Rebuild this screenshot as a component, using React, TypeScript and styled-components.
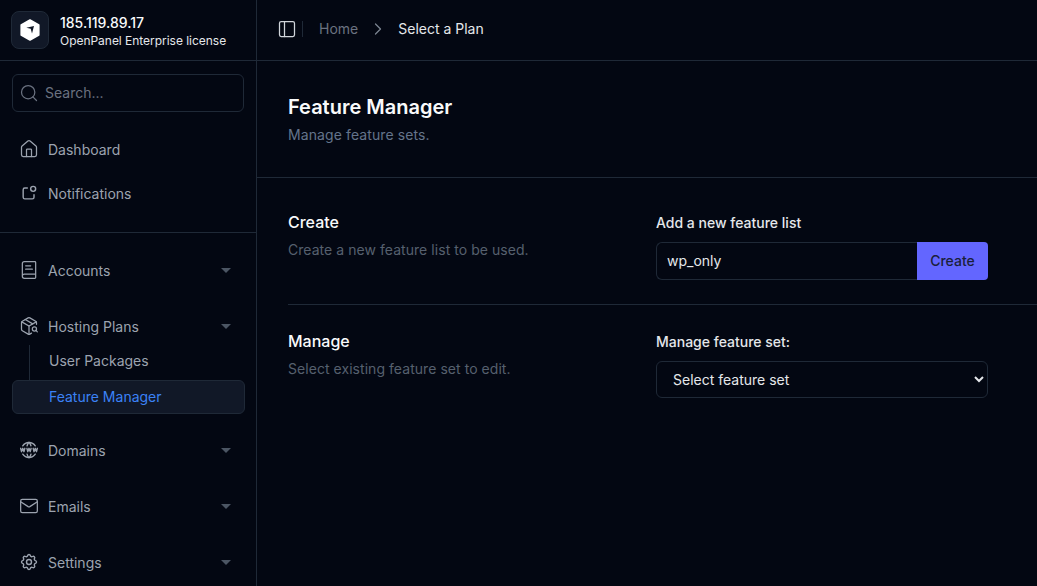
import React from 'react';
import styled, { createGlobalStyle } from 'styled-components';
import { Search, House, BookText, Mail, PanelLeft, ChevronRight, PackageSearch } from 'lucide-react';
import { TbNotification, TbWorldWww, TbSettings } from 'react-icons/tb';

const Global = createGlobalStyle`
  html, body { margin: 0; padding: 0; background: #030712; }
  body { font-family: Inter, "Liberation Sans", sans-serif; overflow: hidden; }
  * { box-sizing: border-box; }
`;

const Shell = styled.div`
  display: flex;
  width: 1037px;
  height: 586px;
  overflow: hidden;
  background: #030712;
`;

const Sidebar = styled.aside`
  width: 257px;
  flex: none;
  height: 586px;
  overflow: hidden;
  border-right: 1px solid #1f2937;
`;

const Brand = styled.div`
  height: 61px;
  display: flex;
  align-items: center;
  gap: 11px;
  padding: 0 11px;
  border-bottom: 1px solid #1f2937;
`;

const LogoBox = styled.div`
  width: 38px;
  height: 38px;
  display: flex;
  align-items: center;
  justify-content: center;
  background: #111827;
  border: 1px solid #1f2937;
  border-radius: 8px;
  color: #fff;
`;

const BrandText = styled.div`
  display: flex;
  flex-direction: column;
  padding-top: 2px;
`;

const BrandTitle = styled.div`
  font-size: 14px;
  line-height: 20px;
  font-weight: 500;
  color: #f9fafb;
`;

const BrandSub = styled.div`
  font-size: 12px;
  line-height: 16px;
  color: #e5e7eb;
  letter-spacing: -0.03px;
`;

const SearchBox = styled.div`
  margin: 13px 12px 0;
  height: 38px;
  display: flex;
  align-items: center;
  gap: 6px;
  padding: 0 6px 2px;
  border: 1px solid #1f2937;
  border-radius: 6px;
  color: #6b7280;
  font-size: 14px;
  svg { margin-top: 2px; }
`;

const TopNav = styled.nav`
  padding: 21px 12px 0;
  border-bottom: 1px solid #1f2937;
  display: flex;
  flex-direction: column;
  gap: 12px;
  height: 121px;
`;

const MainNav = styled.nav`
  padding: 21px 12px 0;
  display: flex;
  flex-direction: column;
`;

const NavRow = styled.div<{ $mb?: number }>`
  height: 32px;
  display: flex;
  align-items: center;
  gap: 9px;
  padding: 0 8px 0 7px;
  margin-bottom: ${p => p.$mb ?? 0}px;
  color: #9ca3af;
  font-size: 14px;
  flex: none;
`;

const NavLabel = styled.span`
  flex: 1;
`;

const Caret = styled.span`
  width: 0;
  height: 0;
  border-left: 5px solid transparent;
  border-right: 5px solid transparent;
  border-top: 5px solid #4b5563;
  margin-right: 5px;
`;

const SubList = styled.div`
  position: relative;
  margin-top: 1px;
  margin-bottom: 20px;
  &::before {
    content: '';
    position: absolute;
    left: 17px;
    top: 2px;
    height: 35px;
    width: 1px;
    background: #1f2937;
  }
`;

const SubItem = styled.div<{ $active?: boolean }>`
  height: 34px;
  margin-top: ${p => (p.$active ? 3 : 0)}px;
  display: flex;
  align-items: center;
  padding-left: 36px;
  padding-bottom: ${p => (p.$active ? 2 : 0)}px;
  width: 233px;
  font-size: 14px;
  color: ${p => (p.$active ? '#3b82f6' : '#9ca3af')};
  background: ${p => (p.$active ? '#111827' : 'transparent')};
  border: 1px solid ${p => (p.$active ? '#1f2937' : 'transparent')};
  border-radius: 6px;
`;

const Main = styled.main`
  flex: 1;
  min-width: 0;
`;

const TopBar = styled.header`
  height: 61px;
  display: flex;
  align-items: center;
  padding: 0 0 3px 20px;
  border-bottom: 1px solid #1f2937;
  font-size: 14px;
`;

const TopDivider = styled.span`
  width: 1px;
  height: 16px;
  background: #1f2937;
  margin: 0 16px 0 5px;
`;

const Crumb = styled.span<{ $current?: boolean }>`
  color: ${p => (p.$current ? '#e5e7eb' : '#6b7280')};
`;

const CrumbSep = styled.span`
  display: flex;
  color: #7b8491;
  margin: 0 10px;
`;

const PageHead = styled.section`
  height: 117px;
  padding: 32px 31px 0;
  border-bottom: 1px solid #1f2937;
`;

const PageTitle = styled.h1`
  margin: 0;
  font-size: 20px;
  line-height: 28px;
  font-weight: 600;
  color: #f9fafb;
`;

const PageSub = styled.p`
  margin: 4px 0 0;
  font-size: 14px;
  line-height: 20px;
  letter-spacing: 0.1px;
  color: #64748b;
`;

const Row = styled.section<{ $h: number; $line?: boolean; $pt: number }>`
  margin-left: 31px;
  height: ${p => p.$h}px;
  padding-top: ${p => p.$pt}px;
  display: grid;
  grid-template-columns: 368px 332px;
  border-bottom: ${p => (p.$line ? '1px solid #1f2937' : 'none')};
`;

const RowTitle = styled.h2`
  margin: 0;
  font-size: 16px;
  line-height: 24px;
  font-weight: 500;
  color: #f9fafb;
`;

const RowSub = styled.p`
  margin: 6px 0 0;
  font-size: 14px;
  line-height: 20px;
  letter-spacing: 0.05px;
  color: #56606e;
`;

const FieldColumn = styled.div`
  padding-top: 3px;
`;

const FieldLabel = styled.label`
  display: block;
  font-size: 14px;
  line-height: 20px;
  font-weight: 500;
  color: #e5e7eb;
  margin-bottom: 9px;
`;

const InputGroup = styled.div`
  display: flex;
  height: 38px;
`;

const TextInput = styled.input`
  flex: 1;
  min-width: 0;
  background: transparent;
  border: 1px solid #1f2937;
  border-right: none;
  border-radius: 6px 0 0 6px;
  color: #e5e7eb;
  font: 14px Inter, sans-serif;
  padding: 0 10px 2px;
  outline: none;
`;

const CreateButton = styled.button`
  width: 71px;
  border: none;
  border-radius: 0 4px 4px 0;
  background: #6366ff;
  color: #1a1f3a;
  font: 500 14px Inter, sans-serif;
  padding: 0 0 2px;
`;

const Select = styled.select`
  width: 332px;
  height: 37px;
  background: #030712;
  border: 1px solid #1f2937;
  border-radius: 6px;
  color: #e5e7eb;
  font: 14px Inter, sans-serif;
  padding: 0 12px;
  outline: none;
`;

const LogoMark = () => (
  <svg width="22" height="24" viewBox="0 0 22 24">
    <path
      fill="#fff"
      stroke="#fff"
      strokeWidth="1.6"
      strokeLinejoin="round"
      d="M11 2 19.800 7V17L11 22 2.200 17V7Z"
    />
    <path fill="#111827" d="M7.300 9.700 15 8 13 15.500 11.700 10.800Z" />
  </svg>
);

export default function App() {
  return (
    <Shell>
      <Global />
      <Sidebar>
        <Brand>
          <LogoBox><LogoMark /></LogoBox>
          <BrandText>
            <BrandTitle>185.119.89.17</BrandTitle>
            <BrandSub>OpenPanel Enterprise license</BrandSub>
          </BrandText>
        </Brand>
        <SearchBox><Search size={20} strokeWidth={1.5} />Search...</SearchBox>
        <TopNav>
          <NavRow><House size={20} strokeWidth={1.5} /><NavLabel>Dashboard</NavLabel></NavRow>
          <NavRow><TbNotification size={20} strokeWidth={1.7} /><NavLabel>Notifications</NavLabel></NavRow>
        </TopNav>
        <MainNav>
          <NavRow $mb={24}><BookText size={20} strokeWidth={1.5} /><NavLabel>Accounts</NavLabel><Caret /></NavRow>
          <NavRow><PackageSearch size={20} strokeWidth={1.5} /><NavLabel>Hosting Plans</NavLabel><Caret /></NavRow>
          <SubList>
            <SubItem>User Packages</SubItem>
            <SubItem $active>Feature Manager</SubItem>
          </SubList>
          <NavRow $mb={24}><TbWorldWww size={20} strokeWidth={1.7} /><NavLabel>Domains</NavLabel><Caret /></NavRow>
          <NavRow $mb={24}><Mail size={20} strokeWidth={1.5} /><NavLabel>Emails</NavLabel><Caret /></NavRow>
          <NavRow><TbSettings size={20} strokeWidth={1.7} /><NavLabel>Settings</NavLabel><Caret /></NavRow>
        </MainNav>
      </Sidebar>
      <Main>
        <TopBar>
          <PanelLeft size={20} strokeWidth={1.5} color="#d1d5db" />
          <TopDivider />
          <Crumb>Home</Crumb>
          <CrumbSep><ChevronRight size={20} strokeWidth={1.5} /></CrumbSep>
          <Crumb $current>Select a Plan</Crumb>
        </TopBar>
        <PageHead>
          <PageTitle>Feature Manager</PageTitle>
          <PageSub>Manage feature sets.</PageSub>
        </PageHead>
        <Row $h={127} $pt={32} $line>
          <div>
            <RowTitle>Create</RowTitle>
            <RowSub>Create a new feature list to be used.</RowSub>
          </div>
          <FieldColumn>
            <FieldLabel>Add a new feature list</FieldLabel>
            <InputGroup>
              <TextInput defaultValue="wp_only" />
              <CreateButton>Create</CreateButton>
            </InputGroup>
          </FieldColumn>
        </Row>
        <Row $h={120} $pt={24}>
          <div>
            <RowTitle>Manage</RowTitle>
            <RowSub>Select existing feature set to edit.</RowSub>
          </div>
          <FieldColumn>
            <FieldLabel>Manage feature set:</FieldLabel>
            <Select><option>Select feature set</option></Select>
          </FieldColumn>
        </Row>
      </Main>
    </Shell>
  );
}
